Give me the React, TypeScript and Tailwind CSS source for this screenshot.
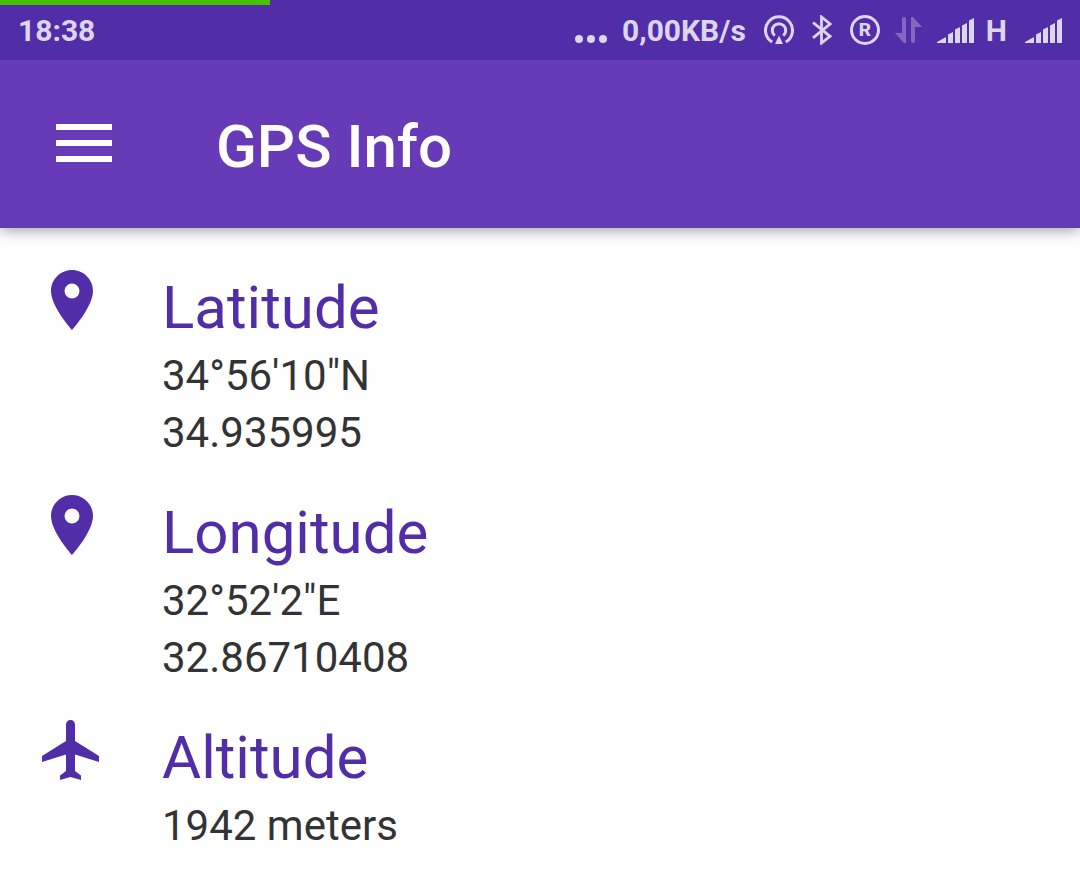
import React from 'react';

const readings = [
  { label: 'Latitude', icon: 'pin', values: ['34°56\'10"N', '34.935995'] },
  { label: 'Longitude', icon: 'pin', values: ['32°52\'2"E', '32.86710408'] },
  { label: 'Altitude', icon: 'plane', values: ['1942 meters'] },
];

const iconPaths: Record<string, string> = {
  pin: 'M12 2C8.13 2 5 5.13 5 9c0 5.25 7 13 7 13s7-7.75 7-13c0-3.87-3.13-7-7-7zm0 9.5a2.5 2.5 0 0 1 0-5 2.5 2.5 0 0 1 0 5z',
  plane:
    'M21 16v-2l-8-5V3.5c0-.83-.67-1.5-1.5-1.5S10 2.67 10 3.5V9l-8 5v2l8-2.5V19l-2 1.5V22l3.5-1 3.5 1v-1.5L13 19v-5.5l8 2.5z',
};

function DotsIcon() {
  return (
    <svg width="32" height="30" viewBox="0 0 32 30" fill="currentColor">
      <circle cx="4" cy="24" r="4" />
      <circle cx="16" cy="24" r="4" />
      <circle cx="28" cy="24" r="4" />
    </svg>
  );
}

function HotspotIcon() {
  return (
    <svg width="30" height="30" viewBox="0 0 30 30" fill="none" stroke="currentColor" strokeWidth="3">
      <path d="M8.2 27A13.5 13.5 0 1 1 21.8 27" />
      <path d="M10.8 20.6A6.7 6.7 0 1 1 19.2 20.6" />
      <path d="M15 20.5L19 29H11z" fill="currentColor" stroke="none" />
    </svg>
  );
}

function BluetoothIcon() {
  return (
    <svg width="20" height="30" viewBox="0 0 20 30" fill="none" stroke="currentColor" strokeWidth="2.8">
      <path d="M1 7.5L18 21.3L9.5 28V2L18 9L1 22.8" />
    </svg>
  );
}

function RegisteredIcon() {
  return (
    <svg width="30" height="30" viewBox="0 0 30 30" fill="none" stroke="currentColor">
      <circle cx="15" cy="15" r="13.5" strokeWidth="3" />
      <text
        x="15"
        y="21"
        textAnchor="middle"
        fill="currentColor"
        stroke="none"
        className="text-[19px] font-extrabold"
      >
        R
      </text>
    </svg>
  );
}

function DataArrowsIcon() {
  return (
    <svg width="27" height="30" viewBox="0 0 27 30" fill="currentColor" className="opacity-35">
      <path d="M7 18V4a2 2 0 0 1 4 0V28H9L0 18z" />
      <path d="M20 12V26a2 2 0 0 1-4 0V2h2L27 12z" />
    </svg>
  );
}

function SignalIcon() {
  return (
    <svg width="37" height="30" viewBox="0 0 37 30" fill="currentColor">
      <path d="M0 28v-1l9-5v6z" />
      <path d="M11 28V19.5L16 17v11z" />
      <path d="M18 28V14.5L23 12v16z" />
      <path d="M25 28V10.5L30 8v20z" />
      <path d="M32 28V5.5L37 3v25z" />
    </svg>
  );
}

function StatusBar() {
  return (
    <div className="relative flex h-[60px] items-center justify-between bg-[#512da8] px-[18px] text-[30px] font-bold leading-[36px] text-[#dcd5ee]">
      <div className="absolute left-0 top-0 h-[5px] w-1/4 bg-[#46c200]" />
      <span className="pt-0.5">18:38</span>
      <div className="flex items-center gap-[15px]">
        <div className="flex items-center gap-[18px]">
          <div className="flex items-center gap-[15px]">
            <DotsIcon />
            <span className="pt-0.5">0,00KB/s</span>
          </div>
          <HotspotIcon />
          <BluetoothIcon />
          <RegisteredIcon />
        </div>
        <DataArrowsIcon />
        <div className="flex items-center gap-3">
          <SignalIcon />
          <div className="flex items-center gap-[18px]">
            <span className="pt-0.5">H</span>
            <SignalIcon />
          </div>
        </div>
      </div>
    </div>
  );
}

export default function App() {
  return (
    <div className="min-h-screen bg-white font-[Roboto,sans-serif]">
      <StatusBar />
      <header className="flex h-[168px] items-start bg-[#673ab7] px-14 text-white shadow-[0_2px_14px_rgba(0,0,0,0.4)]">
        <button type="button" aria-label="Menu" className="mr-[104px] mt-16 flex w-14 flex-col gap-2.5">
          <span className="h-1.5 w-full bg-white" />
          <span className="h-1.5 w-full bg-white" />
          <span className="h-1.5 w-full bg-white" />
        </button>
        <h1 className="mt-[51px] text-[60px] font-medium leading-[72px]">GPS Info</h1>
      </header>

      <main className="flex flex-col gap-7 px-9 py-9">
        {readings.map(({ label, icon, values }) => (
          <section key={label} className="flex items-start gap-[54px]">
            <svg viewBox="0 0 24 24" className="size-18 shrink-0 text-[#512da8]" fill="currentColor">
              <path d={iconPaths[icon]} />
            </svg>
            <div className="pt-1">
              <h2 className="text-[60px] leading-[79px] text-[#512da8]">{label}</h2>
              {values.map((value) => (
                <p key={value} className="text-[42px] leading-[57px] text-[#333333]">
                  {value}
                </p>
              ))}
            </div>
          </section>
        ))}
      </main>
    </div>
  );
}
